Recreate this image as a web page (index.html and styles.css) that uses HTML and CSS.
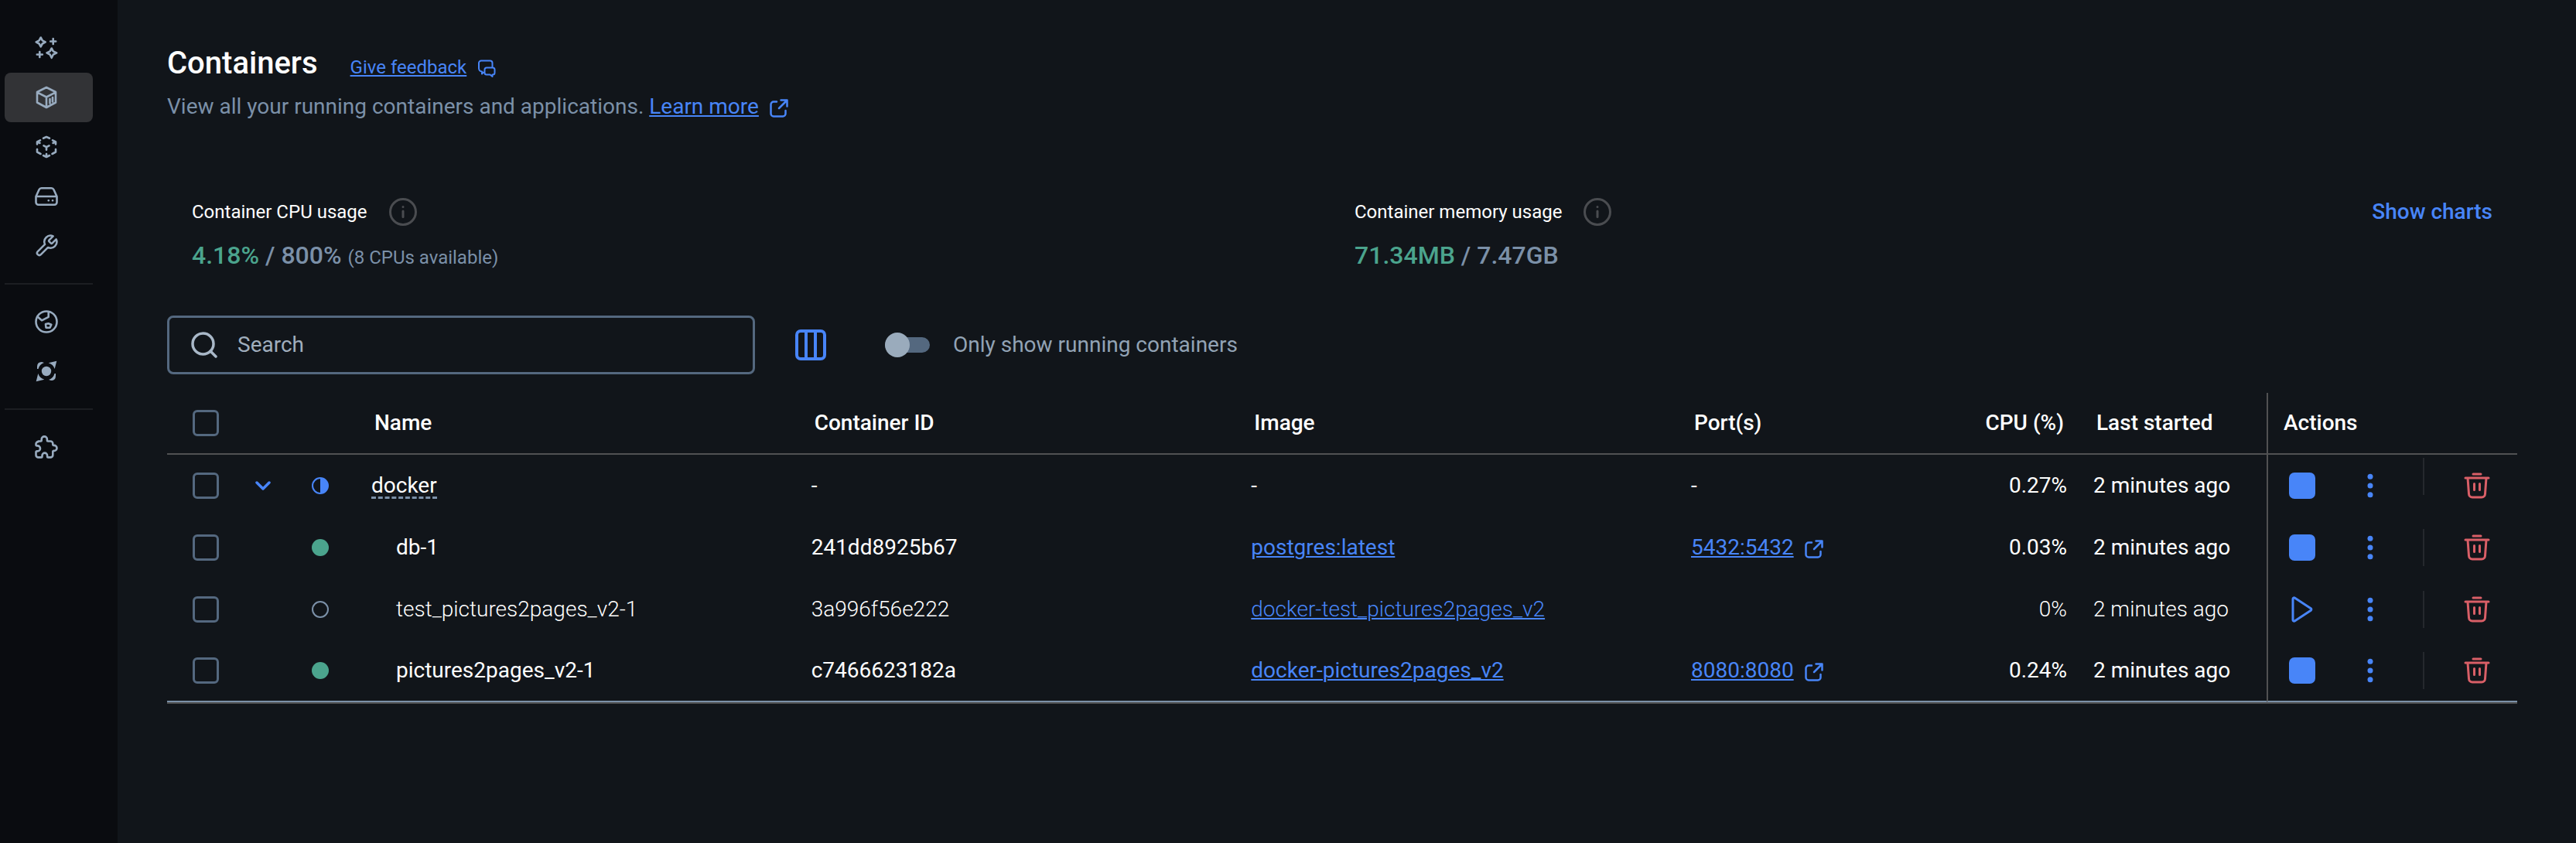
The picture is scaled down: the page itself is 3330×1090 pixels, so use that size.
FILE: index.html
```html
<!DOCTYPE html>
<html lang="en">
<head>
<meta charset="utf-8">
<title>Containers</title>
<link rel="stylesheet" href="styles.css">
</head>
<body>
<svg class="sprite" aria-hidden="true">
  <symbol id="external" viewBox="0 0 24 24"><path d="M9 3.500H5A3.500 3.500 0 0 0 1.500 7v12A3.500 3.500 0 0 0 5 22.500h12a3.500 3.500 0 0 0 3.500-3.500v-4M14.500 1.500h8v8M22 2 12 12"/></symbol>
  <symbol id="kebab" viewBox="0 0 8 32"><circle cx="4" cy="4.300" r="3.500"/><circle cx="4" cy="16" r="3.500"/><circle cx="4" cy="27.700" r="3.500"/></symbol>
  <symbol id="trash" viewBox="0 0 34 34"><path d="M12 2h10M2 7h30M5 7l1.500 20.500a4.500 4.500 0 0 0 4.500 4.500h12a4.500 4.500 0 0 0 4.500-4.500L29 7M13.500 14.500v8M20.500 14.500v8"/></symbol>
  <symbol id="info" viewBox="0 0 36 36"><circle cx="18" cy="18" r="16.500"/><path d="M18 17v7.500M18 11.500v.1"/></symbol>
</svg>
<div class="app">
  <nav class="sidebar" aria-label="Main">
    <a class="nav-item" href="#ask" aria-label="Ask"><svg viewBox="0 0 32 32"><path d="M8.700 2.500 10.800 6.300 14.700 8.400 10.800 10.500 8.700 14.300 6.600 10.500 2.700 8.400 6.600 6.300ZM22.700 16.500 24.800 20.300 29.200 22.400 24.800 24.500 22.700 28.800 20.600 24.500 16.500 22.400 20.600 20.300ZM24.700 4v7M21.200 7.500h7M7.300 21v7M3.800 24.500h7"/></svg></a>
    <a class="nav-item active" href="#containers" aria-label="Containers" aria-current="page"><svg viewBox="0 0 32 32"><path d="M16 3 28 9V22.500L16 29 4 22.500V9ZM4 9.300 16 15.500 28 9.300M16 15.500V29M20.500 18v5.500M24 16v5.500"/></svg></a>
    <a class="nav-item" href="#images" aria-label="Images"><svg viewBox="0 0 32 32"><path d="M12 4.800 16 3l4 1.800M4 12.500V9.500L8 7.300M4.500 9.500 7.500 11M28 12.500V9.500L24 7.300M27.500 9.500 24.500 11M4 19v3.500L8.500 25M28 19v3.500L23.500 25M12 27l4 2 4-2M16 25v4M12.500 14.300 16 16.200l3.500-1.900M16 16.200v3.500"/></svg></a>
    <a class="nav-item" href="#volumes" aria-label="Volumes"><svg viewBox="0 0 32 32"><path d="M2.500 16 6.500 7.300A3.500 3.500 0 0 1 9.700 5.300h12.600a3.500 3.500 0 0 1 3.200 2L29.500 16v7.500a3.200 3.200 0 0 1-3.200 3.200H5.700a3.200 3.200 0 0 1-3.200-3.200ZM2.500 16h27M18.700 21.200h.1M24 21.200h.1"/></svg></a>
    <a class="nav-item" href="#builds" aria-label="Builds"><svg viewBox="0 0 24 24"><path class="thin" d="M14.700 6.300a1 1 0 0 0 0 1.400l1.600 1.600a1 1 0 0 0 1.400 0l3.770-3.770a6 6 0 0 1-7.940 7.940l-6.910 6.910a2.120 2.120 0 0 1-3-3l6.910-6.910a6 6 0 0 1 7.940-7.940l-3.760 3.760z"/></svg></a>
    <hr>
    <a class="nav-item" href="#hub" aria-label="Docker Hub"><svg viewBox="0 0 32 32"><circle cx="16" cy="16" r="13.500"/><path d="M4.500 9.500 10 14.300 18.700 9.800V3.500M15 19l3.500-.8 3.800 1.500-1.800 4h-5Z"/></svg></a>
    <a class="nav-item" href="#scout" aria-label="Docker Scout"><svg class="solid" viewBox="0 0 32 32"><circle cx="16" cy="16" r="6.200"/><path d="M4 13V10Q4 4 10 4L13 5A11.500 11.500 0 0 0 5.500 13ZM18.700 5.300 29.300 2.700 26.700 13A12 12 0 0 0 18.700 5.300ZM5.300 19 2.700 29.300 13.300 26.700A12 12 0 0 1 5.300 19ZM28 19V22Q28 28 22 28L19 27A11.500 11.500 0 0 0 26.500 19Z"/></svg></a>
    <hr>
    <a class="nav-item" href="#extensions" aria-label="Extensions"><svg viewBox="0 0 32 32"><path d="M5.500 8.500H8.500a1.200 1.200 0 0 0 1.200-1.200V6a3.600 3.600 0 0 1 7.200 0v1.300a1.200 1.200 0 0 0 1.200 1.200h3.200a3 3 0 0 1 3 3v1.200a1.200 1.200 0 0 0 1.200 1.200h.5a3.500 3.500 0 0 1 0 7h-.5a1.200 1.200 0 0 0-1.200 1.200v4.300a3 3 0 0 1-3 3h-3.200a1 1 0 0 1-1-1v-1.500a3.300 3.300 0 0 0-6.600 0v1.500a1 1 0 0 1-1 1H5.500a3 3 0 0 1-3-3v-3.800a1.200 1.200 0 0 1 1.200-1.200h.8a3.500 3.500 0 0 0 0-7h-.8a1.200 1.200 0 0 1-1.200-1.200v-1.100a3 3 0 0 1 3-3Z"/></svg></a>
  </nav>

  <main class="main">
    <header class="head">
      <div class="title-row">
        <h1>Containers</h1>
        <a class="link small" href="#feedback"><span>Give feedback</span><svg class="icon-24 chat" viewBox="0 0 24 24"><path d="M8 16.500 6 18.500V15.500A4.500 4.500 0 0 1 2 11.500V4.500A3 3 0 0 1 5 1.500h11.500a3 3 0 0 1 3 3V10M12 10.500h8a2.500 2.500 0 0 1 2.500 2.500v4a2.500 2.500 0 0 1-2.500 2.500h-.5V22l-3-2.500H12A2.500 2.500 0 0 1 9.500 17v-4a2.500 2.500 0 0 1 2.500-2.500Z"/></svg></a>
      </div>
      <p class="subtitle">View all your running containers and applications. <a class="link" href="#learn"><span>Learn more</span><svg class="icon-24"><use href="#external"/></svg></a></p>
    </header>

    <section class="stats" aria-label="Usage">
      <div class="stat">
        <div class="label">Container CPU usage <svg class="info"><use href="#info"/></svg></div>
        <div class="value"><span class="used">4.18%</span> / 800% <small>(8 CPUs available)</small></div>
      </div>
      <div class="stat">
        <div class="label">Container memory usage <svg class="info"><use href="#info"/></svg><button class="charts" type="button">Show charts</button></div>
        <div class="value"><span class="used">71.34MB</span> / 7.47GB</div>
      </div>
    </section>

    <div class="toolbar">
      <label class="search"><svg viewBox="0 0 34 34"><circle cx="15.500" cy="15.500" r="13.500"/><path d="m25 25 7 7"/></svg><input type="text" placeholder="Search" aria-label="Search"></label>
      <button class="columns" type="button" aria-label="Columns"><svg viewBox="0 0 40 40"><rect x="2" y="2" width="36" height="36" rx="5"/><path d="M14 2v36M26 2v36"/></svg></button>
      <label class="toggle"><input type="checkbox" role="switch"><span>Only show running containers</span></label>
    </div>

    <table class="grid">
      <colgroup><col class="c-check"><col class="c-expand"><col class="c-status"><col><col><col><col class="c-ports"><col class="c-cpu"><col class="c-last"><col class="c-actions"></colgroup>
      <thead>
        <tr><th class="check"><input type="checkbox" aria-label="Select all"></th><th></th><th></th><th>Name</th><th>Container ID</th><th>Image</th><th>Port(s)</th><th class="num">CPU (%)</th><th>Last started</th><th class="actions">Actions</th></tr>
      </thead>
      <tbody>
        <tr class="group">
          <td class="check"><input type="checkbox" aria-label="Select docker"></td>
          <td class="mid"><button class="expand" type="button" aria-label="Collapse"><svg viewBox="0 0 20 12"><path d="m2 2 8 8 8-8"/></svg></button></td>
          <td class="mid state"><svg class="status partial" viewBox="0 0 22 22"><circle cx="11" cy="11" r="10"/><path d="M11 1a10 10 0 0 1 0 20Z"/></svg></td>
          <td><span class="project">docker</span></td><td>-</td><td>-</td><td>-</td><td class="num">0.27%</td><td>2 minutes ago</td>
          <td class="actions"><div><button type="button" aria-label="Stop"><span class="stop"></span></button><button type="button" aria-label="More"><svg class="kebab"><use href="#kebab"/></svg></button><i></i><button type="button" aria-label="Delete"><svg class="trash"><use href="#trash"/></svg></button></div></td>
        </tr>
        <tr>
          <td class="check"><input type="checkbox" aria-label="Select db-1"></td><td></td>
          <td class="mid state"><svg class="status running" viewBox="0 0 22 22"><circle cx="11" cy="11" r="11"/></svg></td>
          <td class="child">db-1</td><td>241dd8925b67</td><td><a class="link" href="#postgres"><span>postgres:latest</span></a></td><td><a class="link" href="#5432"><span>5432:5432</span><svg class="icon-24"><use href="#external"/></svg></a></td><td class="num">0.03%</td><td>2 minutes ago</td>
          <td class="actions"><div><button type="button" aria-label="Stop"><span class="stop"></span></button><button type="button" aria-label="More"><svg class="kebab"><use href="#kebab"/></svg></button><i></i><button type="button" aria-label="Delete"><svg class="trash"><use href="#trash"/></svg></button></div></td>
        </tr>
        <tr class="stopped">
          <td class="check"><input type="checkbox" aria-label="Select test_pictures2pages_v2-1"></td><td></td>
          <td class="mid state"><svg class="status exited" viewBox="0 0 22 22"><circle cx="11" cy="11" r="10"/></svg></td>
          <td class="child">test_pictures2pages_v2-1</td><td>3a996f56e222</td><td><a class="link" href="#test"><span>docker-test_pictures2pages_v2</span></a></td><td></td><td class="num">0%</td><td>2 minutes ago</td>
          <td class="actions"><div><button type="button" aria-label="Start"><svg class="play" viewBox="0 0 34 34"><path d="M5 3.300v27.400a1.500 1.500 0 0 0 2.300 1.200l21-13.700a1.500 1.500 0 0 0 0-2.400L7.300 2.100A1.500 1.500 0 0 0 5 3.300Z"/></svg></button><button type="button" aria-label="More"><svg class="kebab"><use href="#kebab"/></svg></button><i></i><button type="button" aria-label="Delete"><svg class="trash"><use href="#trash"/></svg></button></div></td>
        </tr>
        <tr>
          <td class="check"><input type="checkbox" aria-label="Select pictures2pages_v2-1"></td><td></td>
          <td class="mid state"><svg class="status running" viewBox="0 0 22 22"><circle cx="11" cy="11" r="11"/></svg></td>
          <td class="child">pictures2pages_v2-1</td><td>c7466623182a</td><td><a class="link" href="#pages"><span>docker-pictures2pages_v2</span></a></td><td><a class="link" href="#8080"><span>8080:8080</span><svg class="icon-24"><use href="#external"/></svg></a></td><td class="num">0.24%</td><td>2 minutes ago</td>
          <td class="actions"><div><button type="button" aria-label="Stop"><span class="stop"></span></button><button type="button" aria-label="More"><svg class="kebab"><use href="#kebab"/></svg></button><i></i><button type="button" aria-label="Delete"><svg class="trash"><use href="#trash"/></svg></button></div></td>
        </tr>
      </tbody>
    </table>
  </main>
</div>
</body>
</html>
```
FILE: styles.css
```css
:root {
  --blue: #4885f8;
  --green: #4ba48d;
  --muted: #7b90a8;
  --control: #54687f;
  --line: #505152;
}

* { box-sizing: border-box; }

body {
  margin: 0;
  background: #11151a;
  color: #fff;
  font: 400 28px/40px Roboto, sans-serif;
}

button {
  padding: 0;
  border: 0;
  background: none;
  color: inherit;
  font: inherit;
}

svg {
  flex: none;
  fill: none;
  stroke: currentColor;
  stroke-linecap: round;
  stroke-linejoin: round;
}

.sprite { position: absolute; width: 0; height: 0; }

.app { display: flex; min-height: 100vh; }

.sidebar {
  flex: none;
  width: 152px;
  padding: 30px 32px 30px 6px;
  background: #0a0c10;
}

.sidebar hr {
  height: 2px;
  margin: 16px 0;
  border: 0;
  background: #1c1e22;
}

.nav-item {
  display: flex;
  align-items: center;
  height: 64px;
  padding-left: 38px;
  border-radius: 8px;
  color: #98abbf;
}

.nav-item.active { background: #323336; }
.nav-item svg { width: 32px; height: 32px; stroke-width: 2.600; }
.nav-item .thin { stroke-width: 1.900; }
.nav-item .solid { fill: currentColor; stroke: none; }

.main {
  flex: 1;
  min-width: 0;
  padding: 56px 76px 40px 64px;
}

.title-row { display: flex; align-items: baseline; gap: 42px; height: 52px; }

h1 {
  margin: 0;
  font-size: 40px;
  font-weight: 500;
  line-height: 52px;
}

.link {
  display: inline-flex;
  align-items: center;
  gap: 14px;
  color: var(--blue);
  text-decoration: none;
}

.link span {
  text-decoration: underline;
  text-decoration-thickness: 2px;
  text-underline-offset: 2px;
}

.small { font-size: 24px; line-height: 32px; }
.icon-24 { width: 24px; height: 24px; margin-top: 4px; stroke-width: 2.500; }
.chat { stroke-width: 2; }

.subtitle { height: 40px; margin: 10px 0 0; color: var(--muted); }

.stats {
  display: grid;
  grid-template-columns: 1fr 1fr;
  gap: 32px;
  padding: 96px 32px 58px;
}

.label {
  display: flex;
  align-items: center;
  height: 40px;
  font-size: 24px;
}

.info {
  width: 36px;
  height: 36px;
  margin-left: 28px;
  color: #4a4c50;
  stroke-width: 3;
}

.charts {
  margin-left: auto;
  color: var(--blue);
  font-size: 28px;
  font-weight: 500;
}

.value {
  height: 40px;
  margin-top: 16px;
  color: var(--muted);
  font-size: 32px;
  font-weight: 500;
}

.value .used { color: var(--green); }
.value small { font-size: 24px; font-weight: 400; line-height: 24px; }

.toolbar { display: flex; align-items: center; }

.search {
  display: flex;
  align-items: center;
  gap: 26px;
  width: 760px;
  height: 76px;
  padding: 0 28px;
  border: 3px solid var(--control);
  border-radius: 8px;
  color: #a9b8c8;
}

.search svg { width: 34px; height: 34px; stroke-width: 3.500; }

.search input {
  flex: 1;
  min-width: 0;
  padding: 0;
  border: 0;
  outline: 0;
  background: none;
  color: #fff;
  font: inherit;
}

.search input::placeholder { color: #a0aebd; opacity: 1; }

.columns { width: 40px; height: 40px; margin: 0 76px 0 52px; color: var(--blue); }
.columns svg { display: block; width: 40px; height: 40px; stroke-width: 4; }

.toggle { display: flex; align-items: center; gap: 30px; color: #92a3b5; }

.toggle input {
  appearance: none;
  display: flex;
  align-items: center;
  width: 58px;
  height: 20px;
  margin: 0;
  border-radius: 10px;
  background: #54687f;
}

.toggle input::before {
  content: "";
  width: 32px;
  height: 32px;
  border-radius: 50%;
  background: #9aabbc;
}

.grid {
  width: 100%;
  margin-top: 24px;
  table-layout: fixed;
  border-collapse: separate;
  border-spacing: 0;
  border-bottom: 2px solid var(--line);
}

.c-check { width: 84px; }
.c-expand { width: 80px; }
.c-status { width: 80px; }
.c-ports { width: 372px; }
.c-cpu { width: 148px; }
.c-last { width: 244px; }
.c-actions { width: 324px; }

.grid th, .grid td {
  height: 80px;
  padding: 0 16px 0 20px;
  text-align: left;
  white-space: nowrap;
}

.grid th {
  padding: 0 16px 0 24px;
  border-bottom: 2px solid var(--line);
  font-weight: 500;
}

.grid tr:last-child td { border-bottom: 2px solid var(--muted); }
.grid .num { padding-right: 14px; text-align: right; }
.grid th.num { padding-right: 18px; }
.grid thead th { border-bottom-color: var(--line); }
.grid .check { padding: 0 0 0 33px; }
.grid .mid { padding: 0; text-align: center; }
.grid .state { padding-right: 12px; }
.grid .child { padding-left: 52px; }
.grid td svg { display: block; }
.grid .mid svg { margin: 0 auto; }
.stopped { font-weight: 300; }

.check input {
  appearance: none;
  display: block;
  width: 34px;
  height: 34px;
  margin: 0;
  border: 3px solid var(--control);
  border-radius: 6px;
}

.expand { display: block; margin: 0 auto; color: var(--blue); }
.expand svg { width: 20px; height: 12px; stroke-width: 3.500; }

.status { width: 22px; height: 22px; stroke-width: 2; }
.partial { color: var(--blue); }
.partial path { fill: currentColor; stroke: none; }
.running { fill: var(--green); stroke: none; }
.exited { color: var(--muted); }

.project {
  display: inline-block;
  border-bottom: 3px dashed var(--muted);
  line-height: 28px;
}

.grid .actions { padding: 0 24px 0 20px; border-left: 2px solid var(--line); }
.grid td.actions { padding-left: 16px; }
.actions div { display: flex; align-items: center; }

.actions button {
  display: flex;
  align-items: center;
  justify-content: center;
  width: 56px;
  height: 56px;
  color: var(--blue);
}

.actions button + button { margin-left: 32px; }

.actions i {
  width: 2px;
  height: 48px;
  margin: 0 40px;
  background: #25282d;
}

.group .actions i { margin-bottom: 24px; }

.stop { width: 34px; height: 34px; border-radius: 7px; background: var(--blue); }
.play { width: 34px; height: 34px; stroke-width: 3; }
.kebab { width: 8px; height: 32px; fill: currentColor; stroke: none; }
.trash { width: 34px; height: 34px; color: #d95f67; stroke-width: 3; }
```
